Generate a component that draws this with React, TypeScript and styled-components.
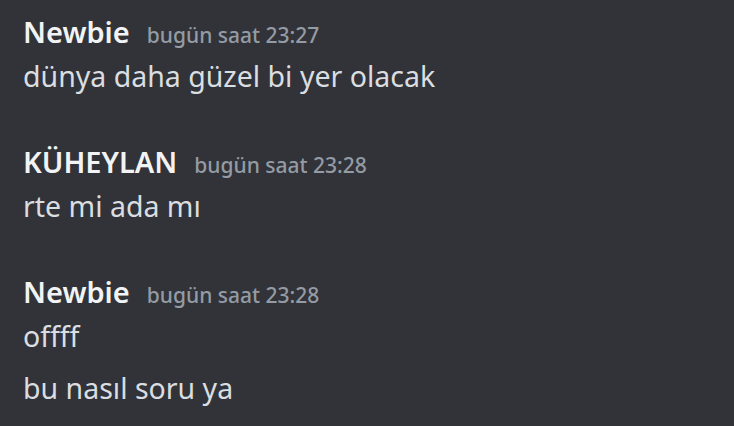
import React from "react";
import styled, { createGlobalStyle } from "styled-components";

const Global = createGlobalStyle`
  html, body {
    margin: 0;
    padding: 0;
    background: #313338;
  }
  body {
    font-family: "Noto Sans", "Open Sans", sans-serif;
  }
`;

const Chat = styled.div`
  width: 734px;
  height: 426px;
  box-sizing: border-box;
  background: #313338;
  padding: 10px 0 0 23px;
  display: flex;
  flex-direction: column;
  gap: 42px;
  overflow: hidden;
`;

const Group = styled.div`
  display: flex;
  flex-direction: column;
`;

const Header = styled.div`
  display: flex;
  align-items: baseline;
  gap: 17px;
  height: 44px;
  line-height: 44px;
`;

const Name = styled.span`
  font-size: 29px;
  font-weight: 600;
  color: #f2f3f5;
`;

const Time = styled.span`
  font-size: 21px;
  font-weight: 500;
  color: #949ba4;
`;

const Message = styled.div<{ $follow?: boolean }>`
  font-size: 28.5px;
  line-height: 44px;
  color: #dbdee1;
  margin-top: ${(p) => (p.$follow ? "8px" : "0")};
`;

type Msg = { name: string; time: string; lines: string[] };

const messages: Msg[] = [
  { name: "Newbie", time: "bugün saat 23:27", lines: ["dünya daha güzel bi yer olacak"] },
  { name: "KÜHEYLAN", time: "bugün saat 23:28", lines: ["rte mi ada mı"] },
  { name: "Newbie", time: "bugün saat 23:28", lines: ["offff", "bu nasıl soru ya"] },
];

export default function App() {
  return (
    <>
      <Global />
      <Chat>
        {messages.map((m, i) => (
          <Group key={i}>
            <Header>
              <Name>{m.name}</Name>
              <Time>{m.time}</Time>
            </Header>
            {m.lines.map((l, j) => (
              <Message key={j} $follow={j > 0}>
                {l}
              </Message>
            ))}
          </Group>
        ))}
      </Chat>
    </>
  );
}
